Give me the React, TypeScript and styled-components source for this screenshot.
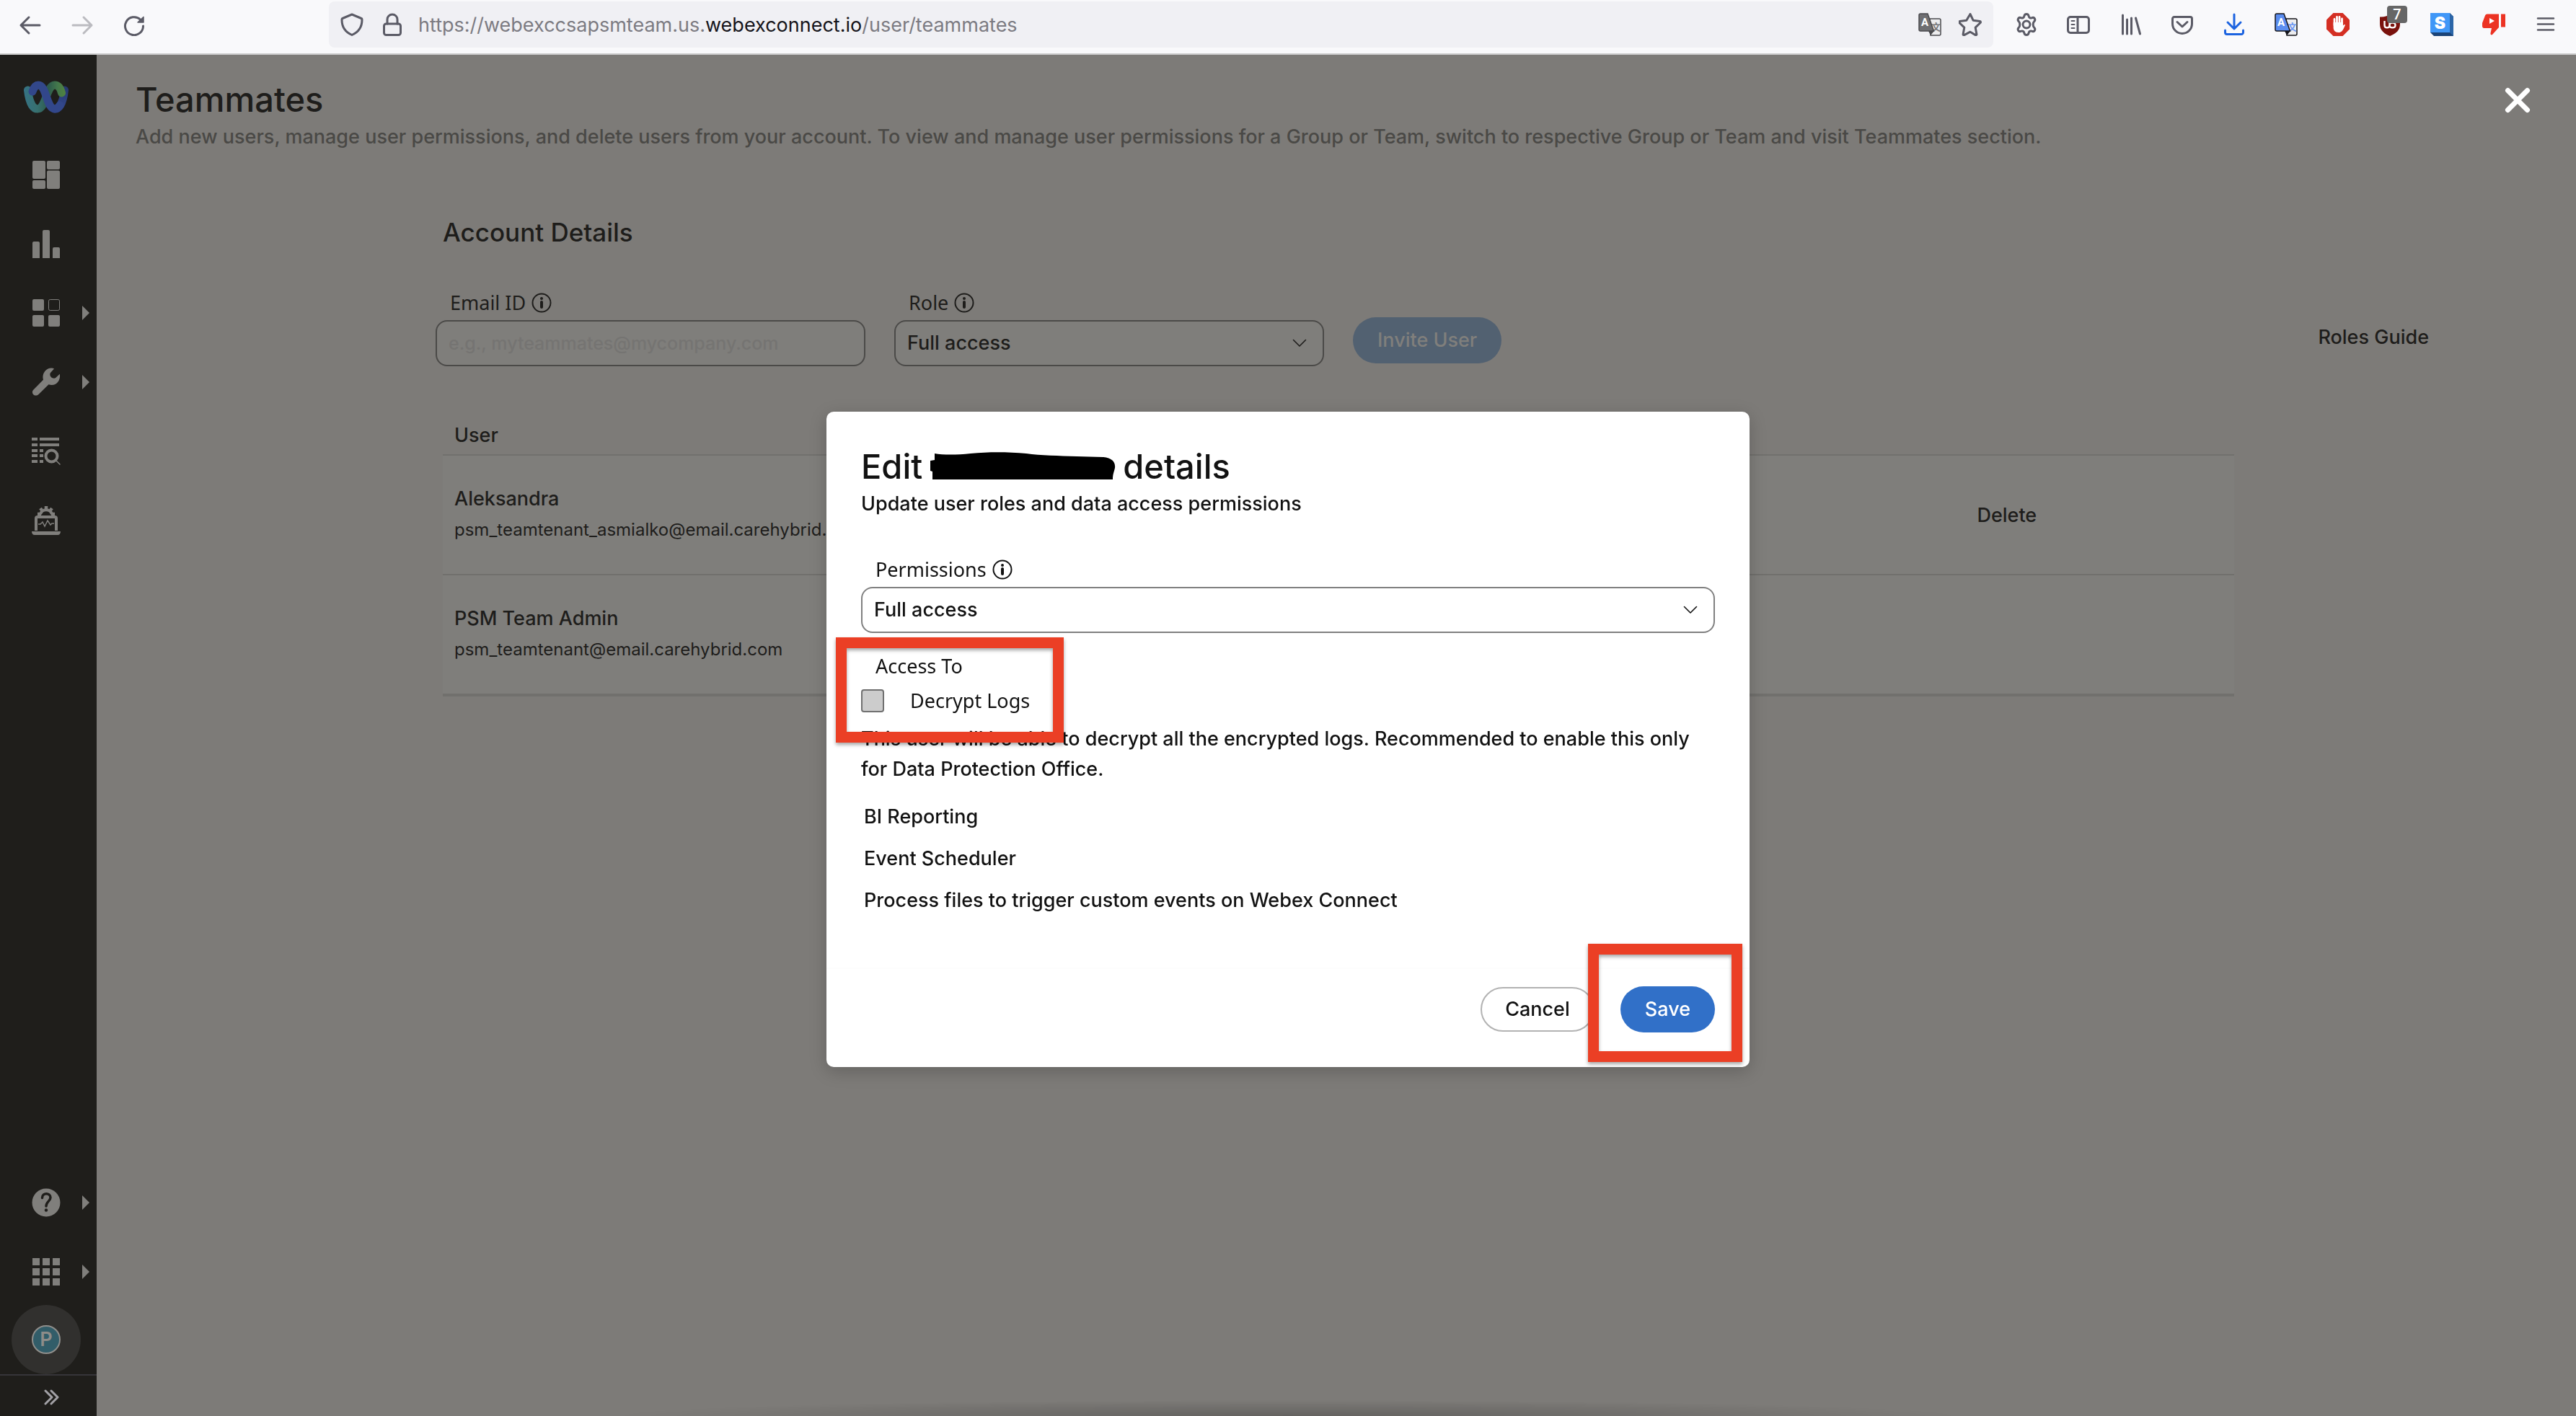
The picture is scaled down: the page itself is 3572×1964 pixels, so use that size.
import React from "react";
import styled, { createGlobalStyle } from "styled-components";

const GlobalStyle = createGlobalStyle`
  *, *::before, *::after { box-sizing: border-box; }
  body {
    margin: 0;
    background: #7d7b78;
    color: #1e1d1b;
    font: 500 27px/40px Inter, "Liberation Sans", sans-serif;
  }
  button, input, select { font: inherit; color: inherit; }
  h1, h2, p { margin: 0; font-weight: 500; }
  svg { display: block; }
`;

/* ---------- browser toolbar ---------- */

const BrowserBar = styled.header`
  display: flex;
  height: 76px;
  padding: 2px 6px 8px;
  background: #f9f9fb;
  border-bottom: 2px solid #cccccc;
`;

const ToolButton = styled.button<{ $width?: number; $color?: string }>`
  position: relative;
  display: grid;
  place-items: center;
  flex: none;
  width: ${(p) => p.$width ?? 72}px;
  height: 64px;
  padding: 0;
  border: 0;
  background: none;
  color: ${(p) => p.$color ?? "#5b5b66"};
`;

const AddressBar = styled.div`
  display: flex;
  align-items: center;
  flex: 1;
  margin: 0 10px 0 234px;
  padding: 0 4px;
  border-radius: 8px;
  background: #f0f0f4;
`;

const Url = styled.a`
  flex: 1;
  padding: 2px 0 0 8px;
  color: #7c7b82;
  font-size: 27px;
  font-weight: 400;
  text-decoration: none;
  white-space: nowrap;

  b { color: #15141a; font-weight: 400; }
`;

const Badge = styled.span`
  position: absolute;
  top: 6px;
  left: 32px;
  width: 28px;
  height: 24px;
  border-radius: 4px;
  background: #666666;
  color: #ffffff;
  font: 500 20px/24px Roboto, sans-serif;
  text-align: center;
`;

/* ---------- side navigation ---------- */

const Shell = styled.div`
  display: flex;
  min-height: calc(100vh - 76px);
`;

const Sidebar = styled.nav`
  display: flex;
  flex-direction: column;
  flex: none;
  width: 134px;
  background: #1f1e1b;
  color: #807f7c;
`;

const LogoLink = styled.a`
  display: grid;
  place-items: center;
  height: 118px;
  padding-right: 6px;
`;

const NavButton = styled.button`
  display: grid;
  grid-template-columns: 24px 1fr 30px;
  place-items: center;
  width: 100%;
  height: 96px;
  padding: 0;
  border: 0;
  background: none;

  > :first-child { grid-column: 2; }
`;

const Spacer = styled.div`
  flex: 1;
`;

const AvatarButton = styled.button`
  display: grid;
  place-items: center;
  width: 96px;
  height: 96px;
  margin: -2px 0 0 16px;
  padding: 0;
  border: 0;
  border-radius: 50%;
  background: #31302e;
`;

const Avatar = styled.span`
  width: 40px;
  height: 40px;
  border: 2px solid #8f8e8b;
  border-radius: 50%;
  background: #325d69;
  color: #8d8c89;
  font-weight: 600;
  line-height: 36px;
  text-align: center;
`;

const ExpandButton = styled.button`
  display: grid;
  place-items: center;
  height: 58px;
  padding: 4px 0 0 8px;
  border: 0;
  border-top: 2px solid #363539;
  background: none;
  color: #a2a1a6;
`;

/* ---------- page ---------- */

const Main = styled.main`
  flex: 1;
  min-width: 0;
  padding-top: 34px;
`;

const PageHeading = styled.div`
  margin: 0 54px 90px;
`;

const Title = styled.h1`
  font-size: 47px;
  line-height: 56px;
`;

const PageNote = styled.p`
  margin-top: 4px;
  color: #4a4946;
`;

const SectionTitle = styled.h2`
  margin: 0 0 58px 480px;
  font-size: 35px;
  line-height: 44px;
`;

const InviteForm = styled.form`
  display: flex;
  align-items: flex-end;
  gap: 40px;
  margin: 0 204px 60px 470px;
`;

const Field = styled.div<{ $width?: string }>`
  width: ${(p) => p.$width ?? "100%"};
`;

const LabelRow = styled.div`
  display: flex;
  align-items: center;
  gap: 8px;
  margin-bottom: 6px;
  padding-left: 20px;
  font: 400 27px/36px "Noto Sans", sans-serif;
`;

const TextInput = styled.input`
  display: block;
  width: 100%;
  height: 64px;
  padding: 0 16px;
  border: 2px solid #4b4a48;
  border-radius: 16px;
  background: #7f7e7b;
  font-size: 25px;

  &::placeholder { color: #757472; opacity: 1; }
`;

const SelectBox = styled.div`
  position: relative;
`;

const Select = styled.select<{ $dim?: boolean }>`
  display: block;
  width: 100%;
  height: 64px;
  padding: 0 16px;
  border: 2px solid ${(p) => (p.$dim ? "#4b4a48" : "#808080")};
  border-radius: 16px;
  background: ${(p) => (p.$dim ? "#7f7e7b" : "#ffffff")};
  appearance: none;
`;

const SelectArrow = styled.svg`
  position: absolute;
  top: 26px;
  right: 24px;
  pointer-events: none;
`;

const PillButton = styled.button<{ $kind: "muted" | "outline" | "primary" }>`
  height: ${(p) => (p.$kind === "outline" ? 62 : 64)}px;
  padding: 0 ${(p) => (p.$kind === "outline" ? 32 : 34)}px;
  border: ${(p) => (p.$kind === "outline" ? "2px solid #b2b2b2" : "0")};
  border-radius: 32px;
  background: ${(p) => ({ muted: "#526171", outline: "#ffffff", primary: "#3170c8" })[p.$kind]};
  color: ${(p) => ({ muted: "#807f7c", outline: "#121212", primary: "#ffffff" })[p.$kind]};
`;

const InviteSlot = styled.div`
  margin-bottom: 4px;
`;

const GuideLink = styled.a`
  margin: 0 0 20px auto;
  color: inherit;
  text-decoration: none;
`;

const TableWrap = styled.div`
  margin: 0 474px 0 480px;
`;

const UserTable = styled.table`
  width: 100%;
  border-spacing: 0;
  table-layout: fixed;
  text-align: left;

  th {
    padding: 16px 16px 6px;
    border-bottom: 2px solid #71706d;
    font-weight: 500;
  }
  td {
    padding: 40px 16px 38px;
    border-bottom: 2px solid #71706d;
    background: #7f7e7b;
  }
  tr:last-child td { border-bottom-width: 4px; }
  th:last-child { width: 15%; }
`;

const Email = styled.div`
  font-size: 24px;
  font-weight: 400;
  line-height: 46px;
`;

const RowAction = styled.button`
  padding: 0;
  border: 0;
  background: none;
`;

/* ---------- dialog ---------- */

const Overlay = styled.div`
  position: fixed;
  inset: 76px 0 0;
  display: flex;
  align-items: center;
  justify-content: center;
  padding-top: 10px;
`;

const CloseButton = styled.button`
  position: absolute;
  top: 38px;
  right: 56px;
  padding: 4px;
  border: 0;
  background: none;
  color: #ffffff;
`;

const DockShade = styled.div`
  position: absolute;
  left: 24%;
  right: 24%;
  bottom: 0;
  height: 22px;
  background: radial-gradient(50% 100% at 50% 100%, rgba(0, 0, 0, 0.2), transparent);
`;

const Dialog = styled.section`
  position: relative;
  width: 1280px;
  padding-top: 48px;
  border-radius: 10px;
  background: #ffffff;
  box-shadow: 0 6px 24px rgba(0, 0, 0, 0.2);
  color: #121212;
`;

const DialogBody = styled.div`
  padding: 0 48px 64px;
`;

const DialogTitle = styled(Title)`
  display: flex;
  gap: 9px;

  svg { margin-top: 8px; }
`;

const DialogNote = styled.p`
  margin: 4px 0 53px;
`;

const GroupLabel = styled.div`
  margin: 28px 0 10px 20px;
  font: 400 27px/36px "Noto Sans", sans-serif;
`;

const CheckRow = styled.label`
  display: flex;
  align-items: center;
  gap: 36px;
  font: 400 27px/40px "Noto Sans", sans-serif;
`;

const Checkbox = styled.input`
  width: 32px;
  height: 32px;
  margin: 0;
  border: 2px solid #707070;
  border-radius: 4px;
  background: #cccccc;
  appearance: none;
`;

const Help = styled.p`
  margin: 12px 0 16px;
  line-height: 42px;
`;

const AccessList = styled.ul`
  margin: 0;
  padding: 0 0 0 4px;
  line-height: 58px;
  list-style: none;
`;

const DialogFooter = styled.footer`
  display: flex;
  align-items: center;
  justify-content: flex-end;
  gap: 36px;
  padding: 24px 48px 48px;
  border-top: 2px solid #fdfdfd;
`;

const Highlight = styled.div`
  position: absolute;
  border: 15px solid #eb3f25;
  box-shadow: 0 3px 5px rgba(0, 0, 0, 0.35), inset 0 3px 5px rgba(0, 0, 0, 0.35);
  pointer-events: none;
`;

const AccessHighlight = styled(Highlight)`
  top: 313px;
  left: 13px;
  width: 316px;
  height: 146px;
`;

const SaveHighlight = styled(Highlight)`
  right: 10px;
  bottom: 7px;
  width: 214px;
  height: 164px;
`;

/* ---------- icons ---------- */

type IconProps = { children: React.ReactNode; w?: number; h?: number; sw?: number };

const Line = ({ children, w = 32, h = 32, sw = 3 }: IconProps) => (
  <svg width={w} height={h} viewBox={`0 0 ${w} ${h}`} fill="none" stroke="currentColor" strokeWidth={sw} strokeLinecap="round" strokeLinejoin="round" aria-hidden="true">
    {children}
  </svg>
);

const Solid = ({ children, w = 40, h = 40 }: IconProps) => (
  <svg width={w} height={h} viewBox={`0 0 ${w} ${h}`} fill="currentColor" aria-hidden="true">
    {children}
  </svg>
);

const InfoIcon = () => (
  <Line w={28} h={28} sw={2}>
    <circle cx="14" cy="14" r="12.5" />
    <path d="M14 13v7" strokeWidth="4" />
    <circle cx="14" cy="8" r="2" fill="currentColor" stroke="none" />
  </Line>
);

const NavArrow = () => (
  <Solid w={10} h={20}>
    <path d="M0 0l10 10L0 20z" />
  </Solid>
);

const Chevron = () => (
  <SelectArrow width="20" height="12" viewBox="0 0 20 12" fill="none" stroke="currentColor" strokeWidth="1.6" strokeLinecap="round" strokeLinejoin="round" aria-hidden="true">
    <path d="M1.500 1.500L10 10l8.500-8.500" />
  </SelectArrow>
);

const WebexLogo = () => (
  <svg width="62" height="46" viewBox="0 0 62 46" fill="none" strokeWidth="11" strokeLinecap="round" aria-hidden="true">
    <defs>
      <linearGradient id="teal" x1="0" y1="0" x2="62" y2="0" gradientUnits="userSpaceOnUse">
        <stop offset="0" stopColor="#357284" />
        <stop offset=".3" stopColor="#37706f" />
        <stop offset=".55" stopColor="#2c5a4c" />
        <stop offset=".75" stopColor="#43774c" />
        <stop offset="1" stopColor="#55873b" />
      </linearGradient>
      <linearGradient id="navy" x1="0" y1="40" x2="0" y2="5" gradientUnits="userSpaceOnUse">
        <stop offset="0" stopColor="#32478f" />
        <stop offset="1" stopColor="#26386b" />
      </linearGradient>
    </defs>
    <path d="M43 39C51 39 55 26 56.500 13" stroke="url(#navy)" />
    <path d="M5.500 13C7 26 11 39 19 39C31 39 31 6 43 6C49 6 51 11 52.500 17" stroke="url(#teal)" />
    <path d="M12 15C14 9 17 6 20 6C32 6 31 39 43 39C46 39 48 37 50 34" stroke="#32478a" />
  </svg>
);

const Translate = ({ front, edge, ink }: { front: string; edge: string; ink: string }) => (
  <svg width="32" height="32" viewBox="0 0 32 32" aria-hidden="true">
    <path d="M16 8h13a2 2 0 0 1 2 2v19a2 2 0 0 1-2 2H17z" fill="#ececee" stroke={edge} strokeWidth="1.500" />
    <text x="24.500" y="24" fontSize="13" fontFamily="'Noto Sans CJK SC', sans-serif" fontWeight="700" textAnchor="middle" fill={ink}>文</text>
    <path d="M14 25h8l-5 6z" fill={edge} />
    <path d="M3 1h10l8.500 24H3a2 2 0 0 1-2-2V3a2 2 0 0 1 2-2z" fill={front} stroke={edge} strokeWidth="1.500" />
    <text x="9" y="18" fontSize="15" fontFamily="Roboto, sans-serif" fontWeight="700" textAnchor="middle" fill="#ffffff">A</text>
  </svg>
);

const icons = {
  back: <Line><path d="M3 17h26M14 6L3 17l11 11" /></Line>,
  forward: <Line><path d="M3 17h26M18 6l11 11-11 11" /></Line>,
  reload: (
    <Line>
      <path d="M28.500 18A12.500 12.500 0 1 1 24.500 9" />
      <path d="M29 5.500V13h-8z" fill="currentColor" strokeWidth="1.500" />
    </Line>
  ),
  shield: <Line><path d="M16 2l13 5.500c1 0 1 1 1 2C30 21 24 27 16 30.500C8 27 2 21 2 9.500c0-1 0-2 1-2z" /></Line>,
  lock: <Line><rect x="4.500" y="15" width="23" height="15.500" rx="3" /><path d="M9 15V9a7 7 0 0 1 14 0v6" /></Line>,
  star: <Line><path d="M16 2.500l4.200 8.800 9.300 1.300c1 .1 1.300 1.200.6 1.900l-6.900 6.700 1.700 9.300c.1.900-.8 1.500-1.600 1.100L16 27.200l-8.300 4.400c-.8.400-1.700-.2-1.600-1.100l1.700-9.300-6.900-6.700c-.7-.7-.4-1.800.6-1.900l9.300-1.300z" transform="translate(0 -1)" /></Line>,
  gear: (
    <Line>
      <circle cx="16" cy="16" r="5" />
      <path d="M12.800 4.500c.3-1.800 1-3 3.200-3s2.900 1.200 3.200 3c.3 2 2.200 3 4 2.300 1.800-.7 3.200-.8 4.200 1s.4 3.100-1 4.300c-1.600 1.300-1.600 6.500 0 7.800 1.400 1.200 2 2.500 1 4.300s-2.400 1.700-4.200 1c-1.800-.7-3.700.3-4 2.300-.3 1.800-1 3-3.200 3s-2.900-1.200-3.200-3c-.3-2-2.200-3-4-2.300-1.800.7-3.200.8-4.200-1s-.4-3.100 1-4.300c1.600-1.300 1.600-6.500 0-7.800-1.400-1.200-2-2.500-1-4.300s2.400-1.700 4.200-1c1.800.7 3.700-.3 4-2.300z" />
    </Line>
  ),
  sidebar: (
    <Line>
      <rect x="1.500" y="5.500" width="29" height="22" rx="3.500" />
      <path d="M15 5.500v22" />
      <path d="M6.500 11h4M6.500 16h4M6.500 21h4" strokeWidth="2" />
    </Line>
  ),
  library: <Line sw={3}><path d="M5.500 3v26M11.500 9v20M17.500 7v22M23.500 7l6 22" /></Line>,
  pocket: <Line><path d="M5 5.500h22a2.500 2.500 0 0 1 2.500 2.500v7a13.500 13.500 0 0 1-27 0V8A2.500 2.500 0 0 1 5 5.500z" /><path d="M9 12.500l7 6.500 7-6.500" /></Line>,
  download: <Line><path d="M16 2v20M7 13l9 9 9-9M3.500 24v3a2.500 2.500 0 0 0 2.500 2.500h20a2.500 2.500 0 0 0 2.500-2.500v-3" /></Line>,
  blocker: (
    <Solid w={32} h={32}>
      <path d="M9.400 0h13.200L32 9.400v13.200L22.600 32H9.400L0 22.600V9.400z" fill="#d42f23" />
      <g fill="none" stroke="#fff" strokeWidth="2.800" strokeLinecap="round">
        <path d="M11 17V8.500M14.500 16V5.500M18 16V5.500M21.500 17V8" />
      </g>
      <path d="M9.600 13h13.300v4.500l1.600-1.300c1-.5 1.700.2 1.200 1.200-2.200 5-4 9.600-9.200 9.600-4.700 0-6.900-3-6.900-7z" fill="#fff" />
    </Solid>
  ),
  ublock: (
    <Solid w={32} h={32}>
      <path d="M16 2c4 2.500 8 3.500 14 3.500V15c0 9-5 13-14 17C7 28 2 24 2 15V5.500C8 5.500 12 4.500 16 2z" fill="#7a120d" />
      <path d="M8.500 11v6c0 4.500 7 4.500 7 0 0 4.500 8 4.500 8 0s-8-4.500-8 0v-6" fill="none" stroke="#fff" strokeWidth="2.400" />
    </Solid>
  ),
  skype: (
    <Solid w={32} h={32}>
      <path d="M0 27l5 5h27V5l-5-5z" fill="#1b4478" />
      <path d="M27 0l5 5v27l-5-5z" fill="#2c66a8" />
      <path d="M0 0h27v27H0z" fill="#4097f7" />
      <text x="13.500" y="22" fontSize="23" fontFamily="Inter, sans-serif" fontWeight="900" textAnchor="middle" fill="#fff">S</text>
    </Solid>
  ),
  dislike: (
    <Solid w={32} h={32}>
      <path d="M7 1.500h16V20L14 30c-1 1-3 0-2.500-2l1.500-7H2.500C.5 21 0 19.500 0 18v-4L4 3.500c.5-1.300 1.500-2 3-2zM26 1.500h6v18h-6z" fill="#ec3323" />
      <path d="M10 7v8l7-4z" fill="#fff" />
    </Solid>
  ),
  menu: <Line><path d="M5 7.500h22M5 15.500h22M5 23.500h22" strokeWidth="2.500" /></Line>,
  dashboard: (
    <Solid>
      <rect x="1" y="1" width="18" height="25" rx="2" />
      <rect x="1" y="28" width="18" height="12" rx="2" />
      <rect x="21" y="1" width="18" height="12" rx="2" />
      <rect x="21" y="14.500" width="18" height="25.500" rx="2" />
    </Solid>
  ),
  chart: <Solid><path d="M1 40V19a2 2 0 0 1 2-2h6a2 2 0 0 1 2 2v21zM15 40V3a2 2 0 0 1 2-2h6a2 2 0 0 1 2 2v37zM29 40V27a2 2 0 0 1 2-2h6a2 2 0 0 1 2 2v13z" /></Solid>,
  apps: (
    <Solid>
      <rect x="1" y="1" width="16" height="16" rx="2" />
      <rect x="23.500" y="1.500" width="15" height="15" rx="2" fill="none" stroke="currentColor" />
      <rect x="1" y="23" width="16" height="16" rx="2" />
      <rect x="23" y="23" width="16" height="16" rx="2" />
    </Solid>
  ),
  wrench: <Solid><path d="M31 1.500l-5 5.500c-1 1.200-1 4 .8 6 1.800 1.800 5 2.200 6.700.8l5.300-5c1.500 7-3 15.200-11 15.200-1.700 0-3-.2-4.300-.8L9.500 37C4 41.500-2 35 2.500 30.500L16 16.800C13.500 9 19.500.500 27 .5c1.500 0 3 .3 4 1z" /></Solid>,
  logs: (
    <Solid>
      <path d="M0 1h8v4H0zM11 1h27v4H11zM0 9h8v4H0zM11 9h27v4H11zM0 17h8v4H0zM11 17h5v4h-5zM0 24h8v4H0zM11 24h5v4h-5zM0 32h8v4H0zM11 32h5v4h-5z" />
      <circle cx="27.500" cy="26.500" r="8" fill="none" stroke="currentColor" strokeWidth="4" />
      <path d="M34 33l5.500 5.500" stroke="currentColor" strokeWidth="1.500" />
    </Solid>
  ),
  monitor: (
    <Solid>
      <path d="M12 11a8.500 8.500 0 0 1 16 0" fill="none" stroke="currentColor" strokeWidth="4" />
      <path d="M20 0v6M12 3l3 4M28 3l-3 4M8 11h5M27 11h5" stroke="currentColor" strokeWidth="4.500" />
      <path d="M6 34V17a2 2 0 0 1 2-2h24a2 2 0 0 1 2 2v17" fill="none" stroke="currentColor" strokeWidth="4" />
      <path d="M9 25h3l3-3 3 6 4-8 4 6 2-2h3" fill="none" stroke="currentColor" strokeWidth="1.500" />
      <path d="M0 35h40c0 3-1.500 5-4 5H4c-2.500 0-4-2-4-5z" />
    </Solid>
  ),
  help: (
    <Solid>
      <circle cx="20" cy="20" r="19.500" />
      <path d="M14.500 13.500c0-8 11.500-7.500 11.500-.5 0 5-6 5.500-6 12" fill="none" stroke="#1f1e1b" strokeWidth="3.500" strokeLinecap="round" />
      <circle cx="20" cy="30.500" r="2.200" fill="#1f1e1b" />
    </Solid>
  ),
  grid: <Solid><path d="M1 1h10v10H1zM15 1h10v10H15zM29 1h10v10H29zM1 15h10v10H1zM15 15h10v10H15zM29 15h10v10H29zM1 29h10v10H1zM15 29h10v10H15zM29 29h10v10H29z" /></Solid>,
};

const Scribble = () => (
  <svg width="260" height="40" viewBox="0 0 260 40" aria-hidden="true">
    <path d="M8 2C20 4 38 4 58 2C85-.5 110 0 135 2C155 5 180 5 205 6L242 7C254 8 259 14 258 22C257 27 255 30 255 38H5V27L2 26V12L8 11z" fill="#000" />
  </svg>
);

const users = [
  { name: "Aleksandra", email: "psm_teamtenant_asmialko@email.carehybrid.com", removable: true },
  { name: "PSM Team Admin", email: "psm_teamtenant@email.carehybrid.com", removable: false },
];

const extensions: { name: string; icon: React.ReactNode; color?: string; badge?: string }[] = [
  { name: "Settings", icon: icons.gear },
  { name: "Sidebars", icon: icons.sidebar },
  { name: "Library", icon: icons.library },
  { name: "Save to Pocket", icon: icons.pocket },
  { name: "Downloads", icon: icons.download, color: "#1c63e0" },
  { name: "Translate", icon: <Translate front="#5b8df0" edge="#15141a" ink="#6b97f2" /> },
  { name: "Ad blocker", icon: icons.blocker },
  { name: "Content blocker", icon: icons.ublock, badge: "7" },
  { name: "S", icon: icons.skype },
  { name: "Dislikes", icon: icons.dislike },
  { name: "Menu", icon: icons.menu },
];

const primaryNav = [
  { name: "Dashboard", icon: icons.dashboard },
  { name: "Reports", icon: icons.chart },
  { name: "Assets", icon: icons.apps, more: true },
  { name: "Tools", icon: icons.wrench, more: true },
  { name: "Logs", icon: icons.logs },
  { name: "Monitoring", icon: icons.monitor },
];

const secondaryNav = [
  { name: "Help", icon: icons.help, more: true },
  { name: "Apps", icon: icons.grid, more: true },
];

const NavItem = ({ item }: { item: { name: string; icon: React.ReactNode; more?: boolean } }) => (
  <NavButton aria-label={item.name}>
    {item.icon}
    {item.more && <NavArrow />}
  </NavButton>
);

export default function App() {
  return (
    <>
      <GlobalStyle />
      <BrowserBar>
        <ToolButton aria-label="Back">{icons.back}</ToolButton>
        <ToolButton aria-label="Forward" $color="#bbbbc0">{icons.forward}</ToolButton>
        <ToolButton aria-label="Reload">{icons.reload}</ToolButton>
        <AddressBar>
          <ToolButton aria-label="Tracking protection" $width={56}>{icons.shield}</ToolButton>
          <ToolButton aria-label="Connection" $width={56}>{icons.lock}</ToolButton>
          <Url href="#">
            https://webexccsapsmteam.us.<b>webexconnect.io</b>/user/teammates
          </Url>
          <ToolButton aria-label="Translate page" $width={56}>
            <Translate front="#6f6f72" edge="#4a4a4d" ink="#77777a" />
          </ToolButton>
          <ToolButton aria-label="Bookmark" $width={56}>{icons.star}</ToolButton>
        </AddressBar>
        {extensions.map((e) => (
          <ToolButton key={e.name} aria-label={e.name} $color={e.color}>
            {e.icon}
            {e.badge && <Badge>{e.badge}</Badge>}
          </ToolButton>
        ))}
      </BrowserBar>

      <Shell>
        <Sidebar>
          <LogoLink href="#" aria-label="Webex Connect"><WebexLogo /></LogoLink>
          {primaryNav.map((n) => <NavItem key={n.name} item={n} />)}
          <Spacer />
          {secondaryNav.map((n) => <NavItem key={n.name} item={n} />)}
          <AvatarButton aria-label="Profile"><Avatar>P</Avatar></AvatarButton>
          <ExpandButton aria-label="Expand menu">
            <Line w={22} h={22}><path d="M3 2l9 9-9 9M11 2l9 9-9 9" /></Line>
          </ExpandButton>
        </Sidebar>

        <Main>
          <PageHeading>
            <Title>Teammates</Title>
            <PageNote>
              Add new users, manage user permissions, and delete users from your account. To view and manage user permissions for a Group or Team, switch to respective Group or Team and visit Teammates section.
            </PageNote>
          </PageHeading>

          <SectionTitle>Account Details</SectionTitle>
          <InviteForm>
            <Field $width="596px">
              <LabelRow><label htmlFor="email">Email ID</label><InfoIcon /></LabelRow>
              <TextInput id="email" type="email" placeholder="e.g., myteammates@mycompany.com" />
            </Field>
            <Field $width="596px">
              <LabelRow><label htmlFor="role">Role</label><InfoIcon /></LabelRow>
              <SelectBox>
                <Select id="role" $dim><option>Full access</option></Select>
                <Chevron />
              </SelectBox>
            </Field>
            <InviteSlot><PillButton type="button" $kind="muted">Invite User</PillButton></InviteSlot>
            <GuideLink href="#">Roles Guide</GuideLink>
          </InviteForm>

          <TableWrap>
            <UserTable>
              <thead>
                <tr><th>User</th><th /><th /></tr>
              </thead>
              <tbody>
                {users.map((u) => (
                  <tr key={u.email}>
                    <td>
                      {u.name}
                      <Email>{u.email}</Email>
                    </td>
                    <td />
                    <td>{u.removable && <RowAction>Delete</RowAction>}</td>
                  </tr>
                ))}
              </tbody>
            </UserTable>
          </TableWrap>
        </Main>
      </Shell>

      <Overlay>
        <DockShade />
        <CloseButton aria-label="Close">
          <Line w={42} h={42} sw={7}><path d="M7.500 7.500l27 27M34.500 7.500l-27 27" /></Line>
        </CloseButton>
        <Dialog role="dialog" aria-labelledby="dialog-title">
          <DialogBody>
            <DialogTitle as="h2" id="dialog-title">Edit <Scribble /> details</DialogTitle>
            <DialogNote>Update user roles and data access permissions</DialogNote>
            <Field>
              <LabelRow><label htmlFor="permissions">Permissions</label><InfoIcon /></LabelRow>
              <SelectBox>
                <Select id="permissions"><option>Full access</option></Select>
                <Chevron />
              </SelectBox>
            </Field>
            <GroupLabel>Access To</GroupLabel>
            <CheckRow><Checkbox type="checkbox" />Decrypt Logs</CheckRow>
            <Help>
              This user will be able to decrypt all the encrypted logs. Recommended to enable this only for Data Protection Office.
            </Help>
            <AccessList>
              <li>BI Reporting</li>
              <li>Event Scheduler</li>
              <li>Process files to trigger custom events on Webex Connect</li>
            </AccessList>
          </DialogBody>
          <DialogFooter>
            <PillButton $kind="outline">Cancel</PillButton>
            <PillButton $kind="primary">Save</PillButton>
          </DialogFooter>
          <AccessHighlight />
          <SaveHighlight />
        </Dialog>
      </Overlay>
    </>
  );
}
